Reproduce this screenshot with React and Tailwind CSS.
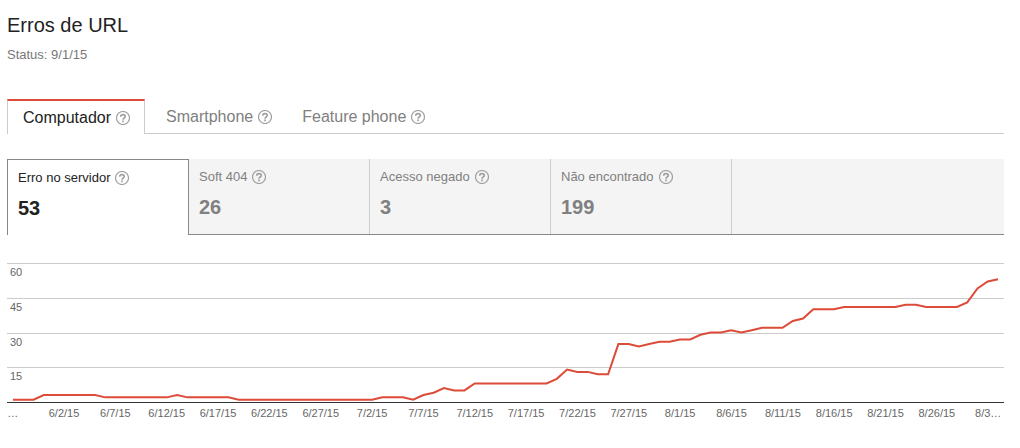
const devices = ["Computador", "Smartphone", "Feature phone"];

const errorTypes = [
  { label: "Erro no servidor", count: 53 },
  { label: "Soft 404", count: 26 },
  { label: "Acesso negado", count: 3 },
  { label: "Não encontrado", count: 199 },
];

// one value per day, 5/28/15 to 9/1/15
const dailyErrors = [
  1, 1, 1, 3, 3, 3, 3, 3, 3, 2, 2, 2, 2, 2, 2, 2, 3, 2, 2, 2, 2, 2, 1, 1, 1,
  1, 1, 1, 1, 1, 1, 1, 1, 1, 1, 1, 2, 2, 2, 1, 3, 4, 6, 5, 5, 8, 8, 8, 8, 8,
  8, 8, 8, 10, 14, 13, 13, 12, 12, 25, 25, 24, 25, 26, 26, 27, 27, 29, 30, 30,
  31, 30, 31, 32, 32, 32, 35, 36, 40, 40, 40, 41, 41, 41, 41, 41, 41, 42, 42,
  41, 41, 41, 41, 43, 49, 52, 53,
];

const yTicks = [60, 45, 30, 15];

const xTicks = [
  "…", "6/2/15", "6/7/15", "6/12/15", "6/17/15", "6/22/15", "6/27/15",
  "7/2/15", "7/7/15", "7/12/15", "7/17/15", "7/22/15", "7/27/15", "8/1/15",
  "8/6/15", "8/11/15", "8/16/15", "8/21/15", "8/26/15", "8/3…",
];

const MAX = 60;
const WIDTH = 997;
const HEIGHT = 139;

function HelpIcon() {
  return (
    <svg className="size-[14px] shrink-0" viewBox="0 0 14 14" fill="none" aria-hidden="true">
      <circle cx="7" cy="7" r="6.5" stroke="#a0a0a0" strokeWidth="1.2" />
      <path
        d="M4.7 5.7C4.7 4.3 5.7 3.6 7 3.6S9.3 4.3 9.3 5.5C9.3 7 7 7 7 8.7"
        stroke="#a0a0a0"
        strokeWidth="1.6"
      />
      <path d="M7 9.5V11.2" stroke="#a0a0a0" strokeWidth="1.7" />
    </svg>
  );
}

function DeviceTabs() {
  return (
    <div role="tablist" className="flex h-[35px] border-b border-[#ccc]">
      {devices.map((name, i) => (
        <button
          key={name}
          role="tab"
          aria-selected={i === 0}
          className={
            i === 0
              ? "-mb-px mr-[6px] flex items-center gap-[5px] border-x border-t-2 border-x-[#ccc] border-t-[#dd4b39] bg-white pr-[14px] pl-[15px] text-base text-[#222]"
              : "flex items-center gap-[5px] px-[15px] pt-px text-base text-[#808080]"
          }
        >
          {name}
          <HelpIcon />
        </button>
      ))}
    </div>
  );
}

function ErrorTabs() {
  return (
    <div role="tablist" className="mt-[25px] flex h-[76px] border-b border-[#888] bg-[#f4f4f4]">
      {errorTypes.map(({ label, count }, i) => (
        <button
          key={label}
          role="tab"
          aria-selected={i === 0}
          className={
            i === 0
              ? "-mb-px flex w-[182px] flex-col items-start gap-2 border-x border-t border-[#888] bg-white px-[10px] pt-[10px] text-[#222]"
              : "flex w-[181px] flex-col items-start gap-2 border-r border-[#ccc] px-[10px] pt-[10px] text-[#808080]"
          }
        >
          <span className="flex items-center gap-[5px] text-[13px] leading-4">
            {label}
            <HelpIcon />
          </span>
          <span className="text-xl leading-7 font-bold">{count}</span>
        </button>
      ))}
    </div>
  );
}

function ErrorChart() {
  const left = 6;
  const step = (WIDTH - 12) / (dailyErrors.length - 1);
  const points = dailyErrors
    .map((v, i) => `${left + i * step},${HEIGHT - (v / MAX) * HEIGHT}`)
    .join(" ");

  return (
    <div className="mt-7 text-[11px] leading-4 text-[#666]">
      <div className="relative border-b border-[#333]">
        <div className="grid h-[139px] grid-rows-4">
          {yTicks.map((tick) => (
            <div key={tick} className="border-t border-[#ccc] pl-[3px]">
              {tick}
            </div>
          ))}
        </div>
        <svg
          className="absolute inset-0 h-[139px] w-full overflow-visible"
          viewBox={`0 0 ${WIDTH} ${HEIGHT}`}
          preserveAspectRatio="none"
          role="img"
          aria-label="Erro no servidor"
        >
          <polyline
            points={points}
            fill="none"
            stroke="#dd4b39"
            strokeWidth="2"
            vectorEffect="non-scaling-stroke"
          />
        </svg>
      </div>
      <div className="-mr-[10px] -ml-5 flex pt-[2px]">
        {xTicks.map((tick) => (
          <span key={tick} className="flex-1 basis-0 text-center">
            {tick}
          </span>
        ))}
      </div>
    </div>
  );
}

export default function App() {
  return (
    <main className="overflow-x-hidden bg-white pt-[11px] pr-4 pl-[7px] font-['Liberation_Sans',Arial,sans-serif]">
      <h1 className="text-xl leading-7 text-[#222]">Erros de URL</h1>
      <p className="mt-2 mb-9 text-[13px] leading-4 text-[#777]">Status: 9/1/15</p>
      <DeviceTabs />
      <ErrorTabs />
      <ErrorChart />
    </main>
  );
}
